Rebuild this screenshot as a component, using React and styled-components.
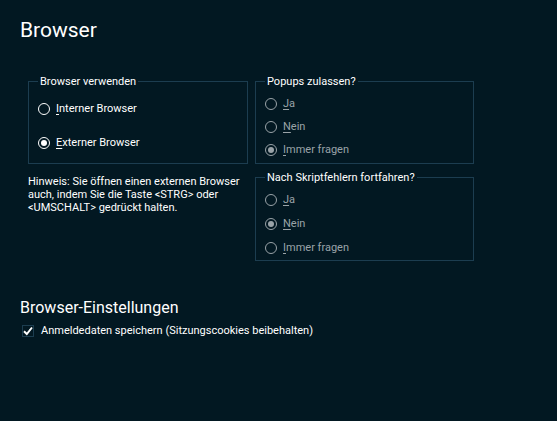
import styled, { createGlobalStyle } from "styled-components";

const GlobalStyle = createGlobalStyle`
  html, body {
    margin: 0;
    padding: 0;
    background: #021822;
  }
  body {
    font-family: Roboto, "Segoe UI", sans-serif;
  }
`;

const Page = styled.div`
  width: 557px;
  height: 421px;
  box-sizing: border-box;
  padding: 18px 20px 0 20px;
  background: #021822;
  color: #ffffff;
  font-size: 11px;
`;

const Title = styled.h1`
  margin: 0;
  font-size: 21px;
  font-weight: 400;
  line-height: 25px;
  color: #ffffff;
`;

const Columns = styled.div`
  display: grid;
  grid-template-columns: 220px 219px;
  column-gap: 7px;
  margin: 32px 0 0 8px;
  align-items: start;
`;

const Column = styled.div`
  display: flex;
  flex-direction: column;
  gap: ${({ $gap }) => $gap}px;
`;

const Group = styled.fieldset`
  margin: 0;
  padding: ${({ $top }) => $top}px 0 0 9px;
  border: 1px solid #1c3d50;
  height: ${({ $h }) => $h}px;
  box-sizing: border-box;
  display: flex;
  flex-direction: column;
  gap: ${({ $gap }) => $gap}px;
`;

const Legend = styled.legend`
  padding: 0 2px;
  margin: 0;
  font-size: 11px;
  line-height: 13px;
  color: #ffffff;
`;

const Option = styled.label`
  display: flex;
  align-items: center;
  gap: 6px;
  height: 12px;
  line-height: 12px;
  color: ${({ $disabled }) => ($disabled ? "#9aa3a8" : "#ffffff")};
`;

const Dot = styled.span`
  width: 12px;
  height: 12px;
  box-sizing: border-box;
  border-radius: 50%;
  border: 1px solid ${({ $disabled }) => ($disabled ? "#9aa3a8" : "#ffffff")};
  display: flex;
  align-items: center;
  justify-content: center;
  flex-shrink: 0;

  &::after {
    content: "";
    width: 6px;
    height: 6px;
    border-radius: 50%;
    background: ${({ $disabled }) => ($disabled ? "#9aa3a8" : "#ffffff")};
    display: ${({ $checked }) => ($checked ? "block" : "none")};
  }
`;

const Key = styled.span`
  text-decoration: underline;
  text-underline-offset: 2px;
`;

const Hint = styled.p`
  margin: 0;
  font-size: 11px;
  line-height: 13px;
  white-space: nowrap;
  color: #ffffff;
`;

const Section = styled.h2`
  margin: 0;
  padding-top: 37px;
  font-size: 16px;
  font-weight: 400;
  line-height: 20px;
  color: #ffffff;
`;

const CheckRow = styled.label`
  display: flex;
  align-items: center;
  gap: 7px;
  margin: 6px 0 0 2px;
  font-size: 11px;
  line-height: 13px;
  color: #ffffff;
`;

const Box = styled.span`
  width: 12px;
  height: 12px;
  box-sizing: border-box;
  border: 1px solid #1c3d50;
  display: flex;
  align-items: center;
  justify-content: center;
`;

function Radio({ label, checked, disabled }) {
  return (
    <Option $disabled={disabled}>
      <Dot $checked={checked} $disabled={disabled} />
      <span>
        <Key>{label[0]}</Key>
        {label.slice(1)}
      </span>
    </Option>
  );
}

export default function App() {
  return (
    <>
      <GlobalStyle />
      <Page>
        <Title>Browser</Title>
        <Columns>
          <Column $gap={11}>
            <Group $h={89} $top={15} $gap={22}>
              <Legend>Browser verwenden</Legend>
              <Radio label="Interner Browser" />
              <Radio label="Externer Browser" checked />
            </Group>
            <Hint>
              Hinweis: Sie öffnen einen externen Browser
              <br />
              auch, indem Sie die Taste &lt;STRG&gt; oder
              <br />
              &lt;UMSCHALT&gt; gedrückt halten.
            </Hint>
          </Column>
          <Column $gap={7}>
            <Group $h={89} $top={10} $gap={11}>
              <Legend>Popups zulassen?</Legend>
              <Radio label="Ja" disabled />
              <Radio label="Nein" disabled />
              <Radio label="Immer fragen" checked disabled />
            </Group>
            <Group $h={90} $top={10} $gap={12}>
              <Legend>Nach Skriptfehlern fortfahren?</Legend>
              <Radio label="Ja" disabled />
              <Radio label="Nein" checked disabled />
              <Radio label="Immer fragen" disabled />
            </Group>
          </Column>
        </Columns>
        <Section>Browser-Einstellungen</Section>
        <CheckRow>
          <Box>
            <svg width="10" height="10" viewBox="0 0 10 10">
              <path d="M1 5.2 L3.8 8 L9 1.5" fill="none" stroke="#ffffff" strokeWidth="2" />
            </svg>
          </Box>
          Anmeldedaten speichern (Sitzungscookies beibehalten)
        </CheckRow>
      </Page>
    </>
  );
}
